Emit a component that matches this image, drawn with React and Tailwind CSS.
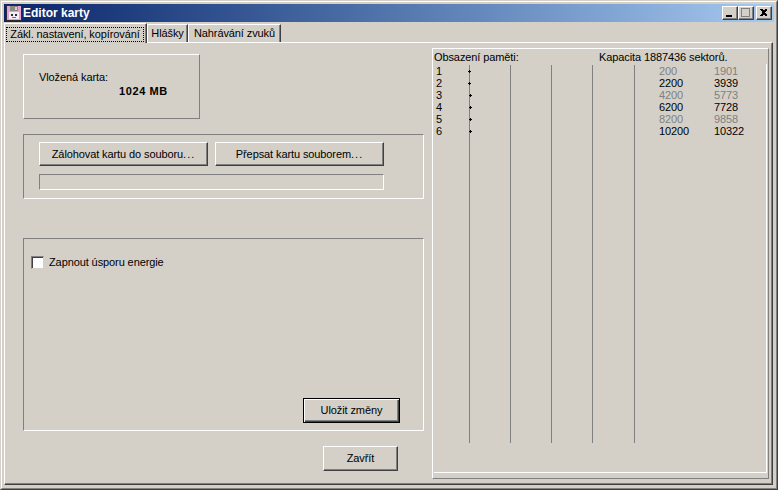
import React from "react";

const FONT = "font-['Liberation_Sans',Tahoma,sans-serif] text-[11px] leading-[13px] tracking-[-0.1px] text-black";
const BTN =
  "flex items-center justify-center bg-[#d4d0c8] border border-t-white border-l-white border-r-[#404040] border-b-[#404040] shadow-[inset_-1px_-1px_0_#808080]";

function FloppyIcon() {
  return (
    <svg width="16" height="16" viewBox="0 0 16 16" shapeRendering="crispEdges" className="shrink-0">
      <rect x="0" y="0" width="16" height="16" fill="#2a2a3a" />
      <rect x="1" y="1" width="14" height="14" fill="#e8a0d0" />
      <rect x="4" y="1" width="8" height="5" fill="#8a8a80" />
      <rect x="9" y="2" width="2" height="3" fill="#d4d0c8" />
      <rect x="3" y="7" width="10" height="7" fill="#f4eef4" />
      <rect x="5" y="9" width="2" height="2" fill="#2a2a3a" />
      <rect x="9" y="9" width="2" height="2" fill="#2a2a3a" />
      <rect x="6" y="12" width="4" height="1" fill="#d0409a" />
    </svg>
  );
}

function CaptionButton({ children, className = "" }) {
  return <div className={`${BTN} w-4 h-[14px] ${className}`}>{children}</div>;
}

function Caption() {
  return (
    <div className="h-[18px] flex items-center pl-[2px] pr-[2px] bg-gradient-to-r from-[#0a246a] to-[#a6caf0]">
      <FloppyIcon />
      <span className="ml-[1px] font-['Liberation_Sans',Tahoma,sans-serif] text-[12px] tracking-normal font-bold text-white">Editor karty</span>
      <div className="ml-auto flex">
        <CaptionButton>
          <svg width="14" height="12" shapeRendering="crispEdges">
            <rect x="3" y="8" width="6" height="2" fill="#000" />
          </svg>
        </CaptionButton>
        <CaptionButton>
          <svg width="14" height="12" shapeRendering="crispEdges">
            <rect x="2.5" y="1.5" width="8" height="8" fill="none" stroke="#808080" />
            <rect x="2" y="1" width="9" height="1" fill="#808080" />
          </svg>
        </CaptionButton>
        <CaptionButton className="ml-[2px]">
          <svg width="14" height="12" shapeRendering="crispEdges">
            <path d="M3 2h2l1 1h1l1-1h2v1l-2 2v1l2 2v1H8L7 8H6L5 9H3V8l2-2V5L3 3z" fill="#000" />
          </svg>
        </CaptionButton>
      </div>
    </div>
  );
}

function Tab({ label, active, className = "" }) {
  if (active) {
    return (
      <div className={`relative z-10 h-5 -mb-[1px] bg-[#d4d0c8] border-t border-l border-white border-r border-r-[#404040] shadow-[inset_-1px_0_0_#808080] pl-[1px] pr-[2px] pt-[3px] ${className}`}>
        <div className="border border-dotted border-black h-[15px] flex items-center justify-center whitespace-nowrap">{label}</div>
      </div>
    );
  }
  return (
    <div className={`h-[18px] mt-[1px] bg-[#d4d0c8] border-t border-l border-white border-r border-r-[#404040] shadow-[inset_-1px_0_0_#808080] flex items-center justify-center whitespace-nowrap ${className}`}>
      {label}
    </div>
  );
}

const ROWS = [
  { n: 1, a: 200, b: 1901, dim: true, dot: 34 },
  { n: 2, a: 2200, b: 3939, dot: 34 },
  { n: 3, a: 4200, b: 5773, dim: true, dot: 35 },
  { n: 4, a: 6200, b: 7728, dot: 35 },
  { n: 5, a: 8200, b: 9858, dim: true, dot: 35 },
  { n: 6, a: 10200, b: 10322, dot: 35 },
];

const GUIDES = [35, 76, 117, 158, 200];

// Memory occupancy map: index column, marker track with guides, sector ranges
function MemoryMap() {
  return (
    <div className="w-[337px] h-[431px] ml-[8px] mt-[5px] border border-t-white border-l-white border-r-[#808080] border-b-[#808080] flex flex-col">
      <div className="flex h-[15px] pl-[1px] pt-[2px] whitespace-nowrap">
        <span className="w-[165px]">Obsazení paměti:</span>
        <span>Kapacita 1887436 sektorů.</span>
      </div>
      <div className="relative flex-1 mr-[1px] mb-[5px] ml-[1px] border-r border-b border-white">
        <div className="relative h-[378px] mt-[3px]">
          {GUIDES.map((x) => (
            <div key={x} className="absolute top-0 bottom-0 w-px bg-[#808080]" style={{ left: x }} />
          ))}
          <div className="relative -mt-[2px]">
            {ROWS.map((r) => (
              <div key={r.n} className="relative flex h-[12px] items-center leading-[12px]">
                <span className="w-[225px] pl-[2px]">{r.n}</span>
                <span className={`w-[55px] ${r.dim ? "text-[#808080]" : ""}`}>{r.a}</span>
                <span className={r.dim ? "text-[#808080]" : ""}>{r.b}</span>
                <svg className="absolute top-[5px]" style={{ left: r.dot }} width="3" height="3" shapeRendering="crispEdges">
                  <path d="M1 0h1v1h1v1H2v1H1V2H0V1h1z" fill="#000" />
                </svg>
              </div>
            ))}
          </div>
        </div>
      </div>
    </div>
  );
}

function Settings() {
  return (
    <div className="w-[401px] ml-[18px] flex flex-col">
      {/* Inserted card */}
      <div className="w-[177px] h-[65px] mt-[11px] border border-t-white border-l-white border-r-[#808080] border-b-[#808080] pl-[15px] pt-[16px]">
        <div>Vložená karta:</div>
        <div className="font-bold pl-[80px] mt-[1px] tracking-[0.6px]">1024 MB</div>
      </div>

      {/* Backup and restore */}
      <div className="h-[65px] mt-[15px] border border-t-[#808080] border-l-[#808080] border-r-white border-b-white pl-[15px] pt-[7px]">
        <div className="flex gap-[7px]">
          <button className={`${BTN} w-[169px] h-[24px]`}>
            <span>Zálohovat kartu do souboru<span className="tracking-[1px]">...</span></span>
          </button>
          <button className={`${BTN} w-[169px] h-[24px]`}>
            <span>Přepsat kartu souborem<span className="tracking-[1px]">...</span></span>
          </button>
        </div>
        <div className="w-[345px] h-[16px] mt-[8px] border border-t-[#808080] border-l-[#808080] border-r-white border-b-white" />
      </div>

      {/* Power saving */}
      <div className="h-[193px] mt-[39px] border border-t-[#808080] border-l-[#808080] border-r-white border-b-white flex flex-col">
        <label className="flex items-center mt-[17px] ml-[7px]">
          <span className="w-[13px] h-[13px] bg-white border border-t-[#808080] border-l-[#808080] border-r-[#d4d0c8] border-b-[#d4d0c8] shadow-[inset_1px_1px_0_#404040]" />
          <span className="ml-[5px]">Zapnout úsporu energie</span>
        </label>
        <div className="mt-auto mb-[7px] mr-[23px] flex justify-end">
          <button className={`${BTN} w-[97px] h-[25px] !border-black shadow-[inset_1px_1px_0_#fff,inset_-1px_-1px_0_#404040,inset_-2px_-2px_0_#808080]`}>Uložit změny</button>
        </div>
      </div>

      <div className="flex justify-end mt-[15px] mr-[26px]">
        <button className={`${BTN} w-[75px] h-[25px]`}>Zavřít</button>
      </div>
    </div>
  );
}

export default function App() {
  return (
    <div className={`w-[778px] h-[490px] bg-[#d4d0c8] ${FONT} overflow-hidden border border-t-[#d4d0c8] border-l-[#d4d0c8] border-r-[#404040] border-b-[#404040]`}>
      <div className="h-full border border-t-white border-l-white border-r-[#808080] border-b-[#808080] p-[2px] flex flex-col">
        <Caption />
        <div className="pr-[1px] pt-[1px] flex-1 flex flex-col">
          <div className="flex h-[19px] items-start">
            <Tab label="Zákl. nastavení, kopírování" active className="w-[143px]" />
            <Tab label="Hlášky" className="w-[41px]" />
            <Tab label="Nahrávání zvuků" className="w-[93px]" />
          </div>
          <div className="flex-1 mb-[1px] border border-t-white border-l-white border-r-[#404040] border-b-[#404040] shadow-[inset_-1px_-1px_0_#808080] flex">
            <Settings />
            <MemoryMap />
          </div>
        </div>
      </div>
    </div>
  );
}
